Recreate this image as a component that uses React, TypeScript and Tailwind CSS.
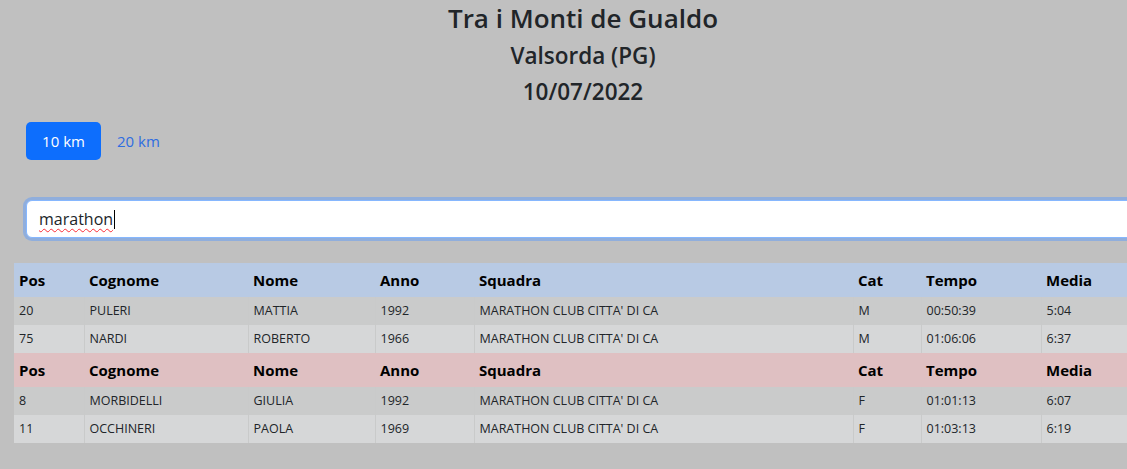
import React from "react";

type Row = {
  pos: string;
  cognome: string;
  nome: string;
  anno: string;
  squadra: string;
  cat: string;
  tempo: string;
  media: string;
};

const maschi: Row[] = [
  { pos: "20", cognome: "PULERI", nome: "MATTIA", anno: "1992", squadra: "MARATHON CLUB CITTA' DI CA", cat: "M", tempo: "00:50:39", media: "5:04" },
  { pos: "75", cognome: "NARDI", nome: "ROBERTO", anno: "1966", squadra: "MARATHON CLUB CITTA' DI CA", cat: "M", tempo: "01:06:06", media: "6:37" },
];

const femmine: Row[] = [
  { pos: "8", cognome: "MORBIDELLI", nome: "GIULIA", anno: "1992", squadra: "MARATHON CLUB CITTA' DI CA", cat: "F", tempo: "01:01:13", media: "6:07" },
  { pos: "11", cognome: "OCCHINERI", nome: "PAOLA", anno: "1969", squadra: "MARATHON CLUB CITTA' DI CA", cat: "F", tempo: "01:03:13", media: "6:19" },
];

const cols = [
  { label: "Pos", w: "w-[70px]" },
  { label: "Cognome", w: "w-[164px]" },
  { label: "Nome", w: "w-[127px]" },
  { label: "Anno", w: "w-[99px]" },
  { label: "Squadra", w: "w-[379px]" },
  { label: "Cat", w: "w-[68px]" },
  { label: "Tempo", w: "w-[120px]" },
  { label: "Media", w: "w-[111px]" },
];

function HeadRow({ bg }: { bg: string }) {
  return (
    <tr className={`h-[34px] ${bg}`}>
      {cols.map((c) => (
        <th key={c.label} className={`${c.w} pl-[5px] text-left text-[15px] font-bold text-black`}>
          {c.label}
        </th>
      ))}
    </tr>
  );
}

function BodyRow({ r, i }: { r: Row; i: number }) {
  const cells = [r.pos, r.cognome, r.nome, r.anno, r.squadra, r.cat, r.tempo, r.media];
  return (
    <tr className={`h-[28px] ${i % 2 === 0 ? "bg-[#cacbcb]" : "bg-[#d6d7d8]"}`}>
      {cells.map((v, k) => (
        <td key={k} className="border-r border-[#c9caca] pl-[5px] text-[12.5px] text-[#212529]">
          {v}
        </td>
      ))}
    </tr>
  );
}

export default function App() {
  return (
    <div className="min-h-screen w-full overflow-hidden bg-[#c0c0c0] font-['Open_Sans',sans-serif] text-[#212529]">
      <div className="w-[1166px]">
        <div className="flex flex-col items-center pb-[15px]">
          <h3 className="text-[26px] leading-[36px] font-semibold">Tra i Monti de Gualdo</h3>
          <h4 className="mt-[5px] text-[22.5px] leading-[30px] font-semibold">Valsorda (PG)</h4>
          <h4 className="mt-[6px] text-[22.5px] leading-[30px] font-semibold">10/07/2022</h4>
        </div>

        <div className="flex items-center pl-[26px]">
          <button className="h-[38px] w-[75px] rounded-[5px] bg-[#0d6efd] text-[15px] text-white">10 km</button>
          <button className="h-[38px] px-4 text-[15px] text-[#2f6de0]">20 km</button>
        </div>

        <div className="mt-[40px] ml-[26px] w-[1130px] rounded-[6px] border border-[#86b7fe] bg-white shadow-[0_0_0_3px_#90aedc]">
          <div className="flex h-[36px] items-center pl-[12px] text-[16px] text-[#212529]">
            <span className="underline decoration-wavy decoration-red-500 decoration-1 underline-offset-[3px]">marathon</span>
            <span className="ml-px h-[19px] w-px bg-black" />
          </div>
        </div>

        <table className="mt-[25px] ml-[14px] w-[1138px] table-fixed border-collapse">
          <thead>
            <HeadRow bg="bg-[#b8cae4]" />
          </thead>
          <tbody>
            {maschi.map((r, i) => (
              <BodyRow key={r.pos} r={r} i={i} />
            ))}
            <HeadRow bg="bg-[#dfc0c2]" />
            {femmine.map((r, i) => (
              <BodyRow key={r.pos} r={r} i={i} />
            ))}
          </tbody>
        </table>
      </div>
    </div>
  );
}
